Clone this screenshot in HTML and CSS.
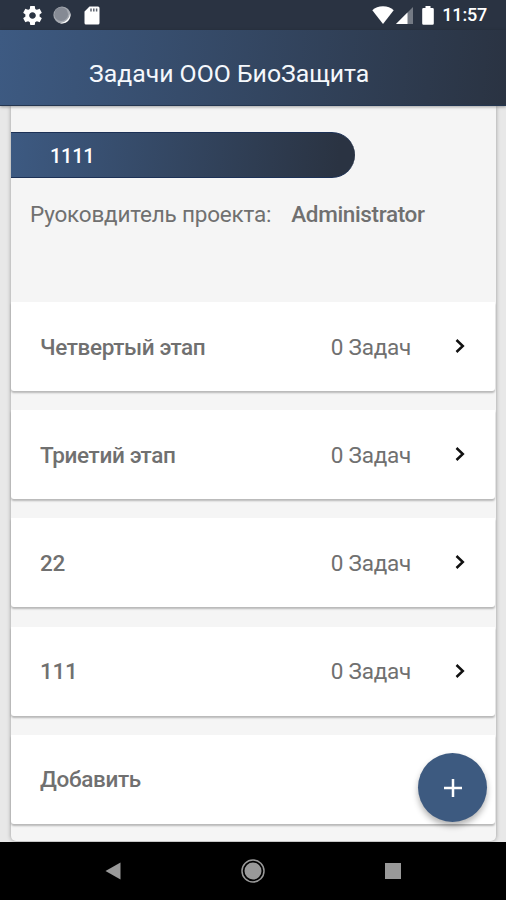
FILE: index.html
```html
<!DOCTYPE html>
<html lang="ru">
<head>
    <meta charset="UTF-8">
    <meta name="viewport" content="width=device-width, initial-scale=1.0">
    <title>Задачи ООО БиоЗащита</title>
    <link rel="stylesheet" href="styles.css">
</head>
<body>
    <div class="status-bar">
        <div class="status-left">
            <svg class="icon-gear" viewBox="2 2 20 20"><path fill="#fff" fill-rule="evenodd" d="M19.43 12.98c.04-.32.07-.64.07-.98s-.03-.66-.07-.98l2.11-1.65c.19-.15.24-.42.12-.64l-2-3.46c-.12-.22-.39-.3-.61-.22l-2.49 1c-.52-.4-1.08-.73-1.69-.98l-.38-2.65C14.46 2.18 14.25 2 14 2h-4c-.25 0-.46.18-.49.42l-.38 2.65c-.61.25-1.17.59-1.69.98l-2.49-1c-.23-.09-.49 0-.61.22l-2 3.46c-.13.22-.07.49.12.64l2.11 1.65c-.04.32-.07.65-.07.98s.03.66.07.98l-2.11 1.65c-.19.15-.24.42-.12.64l2 3.46c.12.22.39.3.61.22l2.49-1c.52.4 1.08.73 1.69.98l.38 2.65c.03.24.24.42.49.42h4c.25 0 .46-.18.49-.42l.38-2.65c.61-.25 1.17-.59 1.69-.98l2.49 1c.23.09.49 0 .61-.22l2-3.46c.12-.22.07-.49-.12-.64l-2.11-1.65zM12 15.5c-1.93 0-3.500-1.57-3.500-3.500s1.57-3.500 3.500-3.500 3.500 1.57 3.500 3.500-1.57 3.500-3.500 3.500z"/></svg>
            <svg class="icon-sync" viewBox="0 0 18 18"><circle cx="9" cy="9" r="8.6" fill="#a5a9b0"/><path d="M17.2 7A8.5 8.5 0 0 1 7 17.2A11 11 0 0 0 17.2 7z" fill="#fff"/><circle cx="8.2" cy="8.2" r="6.9" fill="#858a94"/></svg>
            <svg class="icon-card" viewBox="0 0 16 19"><path fill="#fff" d="M5.5.5H14a1.5 1.5 0 0 1 1.5 1.5v15a1.5 1.5 0 0 1-1.5 1.5H2A1.5 1.5 0 0 1 .5 17V5.500z"/><path d="M7 2.5v3M9.800 2.500v3M12.600 2.500v3" stroke="#5b626d" stroke-width="1.5"/></svg>
        </div>
        <div class="status-right">
            <svg class="icon-wifi" viewBox="0 0 22 18"><path fill="#fff" d="M11 18L.3 4.2C3 1.8 6.7.3 11 .3s8 1.500 10.700 3.900z"/></svg>
            <svg class="icon-signal" viewBox="0 0 18 17"><path fill="#fff" fill-opacity=".35" d="M0 17L17 0v17z"/><path fill="#fff" d="M0 17L11.5 5.5V17z"/></svg>
            <svg class="icon-battery" viewBox="0 0 12 19"><path fill="#fff" d="M3.5 0h5v2H10.5A1.3 1.3 0 0 1 11.8 3.3v14.2A1.3 1.3 0 0 1 10.5 18.8h-9A1.3 1.3 0 0 1 .2 17.5V3.3A1.3 1.3 0 0 1 1.5 2h2z"/></svg>
            <span class="clock">11:57</span>
        </div>
    </div>

    <header class="header">
        <h1 class="title">Задачи ООО БиоЗащита</h1>
    </header>

    <main class="content">
        <section class="project">
            <div class="project-name">1111</div>
            <div class="manager">
                <span class="manager-label">Руоковдитель проекта:</span>
                <span class="manager-name">Administrator</span>
            </div>
            <div class="stages">
                <div class="stage">
                    <span class="stage-name">Четвертый этап</span>
                    <span class="stage-count">0 Задач</span>
                    <svg class="arrow" viewBox="0 0 10 16"><path d="M1.5 2L7.8 8L1.5 14"/></svg>
                </div>
                <div class="stage">
                    <span class="stage-name">Триетий этап</span>
                    <span class="stage-count">0 Задач</span>
                    <svg class="arrow" viewBox="0 0 10 16"><path d="M1.5 2L7.8 8L1.5 14"/></svg>
                </div>
                <div class="stage">
                    <span class="stage-name">22</span>
                    <span class="stage-count">0 Задач</span>
                    <svg class="arrow" viewBox="0 0 10 16"><path d="M1.5 2L7.8 8L1.5 14"/></svg>
                </div>
                <div class="stage">
                    <span class="stage-name">111</span>
                    <span class="stage-count">0 Задач</span>
                    <svg class="arrow" viewBox="0 0 10 16"><path d="M1.5 2L7.8 8L1.5 14"/></svg>
                </div>
                <div class="stage">
                    <span class="stage-name">Добавить</span>
                </div>
            </div>
        </section>
        <button class="fab" aria-label="Добавить">
            <svg viewBox="0 0 18 18"><path d="M9 0v18M0 9h18"/></svg>
        </button>
    </main>

    <nav class="nav-bar">
        <svg class="nav-icon" viewBox="0 0 24 24"><path fill="#999" d="M4.5 12L19.5 3.5v17z"/></svg>
        <svg class="nav-icon" viewBox="0 0 24 24"><circle cx="12" cy="12" r="11" fill="none" stroke="#999" stroke-width="1.5"/><circle cx="12" cy="12" r="8.5" fill="#999"/></svg>
        <svg class="nav-icon" viewBox="0 0 24 24"><path fill="#999" d="M4 4h16v16H4z"/></svg>
    </nav>
</body>
</html>
```

FILE: styles.css
```css
* {
    box-sizing: border-box;
}
body {
    margin: 0;
    height: 900px;
    display: flex;
    flex-direction: column;
    overflow: hidden;
    font-family: Roboto, "Liberation Sans", sans-serif;
    font-size: 22.5px;
    background: #e8e8e8;
    color: #707070;
}
svg {
    display: block;
    flex: none;
}

/* status bar */
.status-bar {
    flex: none;
    height: 30px;
    padding: 0 19px 0 23px;
    display: flex;
    justify-content: space-between;
    align-items: center;
    background: #2a3342;
}
.status-left,
.status-right {
    display: flex;
    align-items: center;
}
.icon-gear {
    width: 19px;
    height: 19px;
}
.icon-sync {
    width: 18px;
    height: 18px;
    margin-left: 11px;
}
.icon-card {
    width: 16px;
    height: 19px;
    margin-left: 13px;
}
.icon-wifi {
    width: 22px;
    height: 18px;
}
.icon-signal {
    width: 18px;
    height: 17px;
    margin: 1px 0 0 2px;
}
.icon-battery {
    width: 12px;
    height: 19px;
    margin-left: 8px;
}
.clock {
    margin-left: 8px;
    font-size: 18px;
    line-height: 30px;
    font-weight: 500;
    letter-spacing: -0.2px;
    color: #fff;
}

/* header */
.header {
    flex: none;
    position: relative;
    z-index: 1;
    height: 76px;
    padding: 12px 0 0 89px;
    display: flex;
    align-items: center;
    background: linear-gradient(95deg, #3d5a82, #2a3342);
    border-bottom: 1px solid #243650;
    box-shadow: 0 1px 3px rgba(0, 0, 0, 0.35);
}
.title {
    margin: 0;
    font-size: 24.8px;
    font-weight: 400;
    color: #f5f8fc;
    white-space: nowrap;
}

/* content */
.content {
    flex: 1;
    position: relative;
    padding: 0 10px 1px 11px;
    display: flex;
}
.project {
    flex: 1;
    padding-top: 26px;
    background: #f5f5f5;
    border-radius: 0 0 5px 5px;
    box-shadow: 0 0 4px rgba(0, 0, 0, 0.35);
}
.project-name {
    width: 344px;
    height: 46px;
    padding-left: 39px;
    border-top: 1px solid #1c3156;
    border-bottom: 1px solid #1c3156;
    border-radius: 0 23px 23px 0;
    background: linear-gradient(95deg, #3d5a82, #2a3342 95%);
    color: #fff;
    font-size: 20px;
    line-height: 46px;
    font-weight: 500;
    letter-spacing: -0.3px;
}
.manager {
    height: 124px;
    padding: 22px 0 0 19px;
    display: flex;
    gap: 20px;
    line-height: 28px;
    white-space: nowrap;
}
.manager-label {
    letter-spacing: -0.2px;
}
.manager-name,
.stage-name {
    font-weight: 500;
    letter-spacing: -0.35px;
}
.stages {
    display: flex;
    flex-direction: column;
    gap: 19.2px;
    padding-right: 1.5px;
}
.stage {
    height: 89px;
    padding: 0 30px 0 29px;
    display: flex;
    align-items: center;
    background: #fff;
    border-radius: 0 0 3px 3px;
    box-shadow: 0 2px 2px rgba(0, 0, 0, 0.25);
}
.stage-name {
    flex: 1;
}
.stage-count {
    letter-spacing: -0.25px;
}
.arrow {
    width: 10px;
    height: 16px;
    margin: 0 0 1px 43.5px;
    fill: none;
    stroke: #111;
    stroke-width: 2.5;
}
.fab {
    position: absolute;
    right: 19px;
    bottom: 20px;
    width: 69px;
    height: 69px;
    padding: 0;
    border: none;
    border-radius: 50%;
    display: flex;
    justify-content: center;
    align-items: center;
    background: #3d5a80;
    box-shadow: 0 4px 6px rgba(0, 0, 0, 0.3);
}
.fab svg {
    width: 18px;
    height: 18px;
    stroke: #fff;
    stroke-width: 2.5;
}

/* navigation */
.nav-bar {
    flex: none;
    height: 58px;
    display: flex;
    justify-content: center;
    align-items: center;
    gap: 116px;
    background: #000;
}
.nav-icon {
    width: 24px;
    height: 24px;
}
```
